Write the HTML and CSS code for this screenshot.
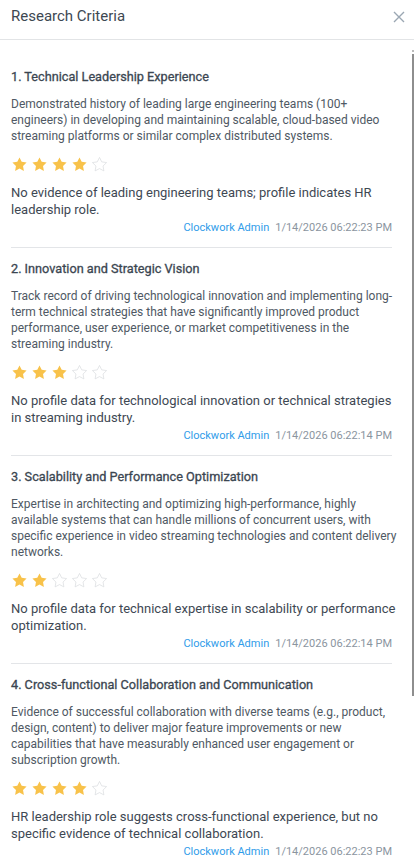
FILE: index.html
```html
<!DOCTYPE html>
<html>
<head>
<meta charset="utf-8">
<link rel="stylesheet" href="styles.css">
</head>
<body>
<div class="panel">
  <div class="header">
    <div class="heading">Research Criteria</div>
    <svg class="close" width="12" height="12" viewBox="0 0 12 12"><path d="M1 1L11 11M11 1L1 11" stroke="#9ba7b3" stroke-width="1.4" fill="none"/></svg>
  </div>
  <div class="list">
    <div class="item">
      <div class="title">1. Technical Leadership Experience</div>
      <div class="desc">Demonstrated history of leading large engineering teams (100+ engineers) in developing and maintaining scalable, cloud-based video streaming platforms or similar complex distributed systems.</div>
      <div class="stars">
        <svg class="star on" viewBox="0 0 24 24"><path d="M12 2l3.09 6.26L22 9.27l-5 4.87 1.18 6.88L12 17.77l-6.18 3.25L7 14.14 2 9.27l6.91-1.01L12 2z"/></svg>
        <svg class="star on" viewBox="0 0 24 24"><path d="M12 2l3.09 6.26L22 9.27l-5 4.87 1.18 6.88L12 17.77l-6.18 3.25L7 14.14 2 9.27l6.91-1.01L12 2z"/></svg>
        <svg class="star on" viewBox="0 0 24 24"><path d="M12 2l3.09 6.26L22 9.27l-5 4.87 1.18 6.88L12 17.77l-6.18 3.25L7 14.14 2 9.27l6.91-1.01L12 2z"/></svg>
        <svg class="star on" viewBox="0 0 24 24"><path d="M12 2l3.09 6.26L22 9.27l-5 4.87 1.18 6.88L12 17.77l-6.18 3.25L7 14.14 2 9.27l6.91-1.01L12 2z"/></svg>
        <svg class="star off" viewBox="0 0 24 24"><path d="M12 2l3.09 6.26L22 9.27l-5 4.87 1.18 6.88L12 17.77l-6.18 3.25L7 14.14 2 9.27l6.91-1.01L12 2z"/></svg>
      </div>
      <div class="comment">No evidence of leading engineering teams; profile indicates HR leadership role.</div>
      <div class="meta"><span class="author">Clockwork Admin</span><span class="date">1/14/2026 06:22:23 PM</span></div>
    </div>
    <div class="item">
      <div class="title">2. Innovation and Strategic Vision</div>
      <div class="desc">Track record of driving technological innovation and implementing long-term technical strategies that have significantly improved product performance, user experience, or market competitiveness in the streaming industry.</div>
      <div class="stars">
        <svg class="star on" viewBox="0 0 24 24"><path d="M12 2l3.09 6.26L22 9.27l-5 4.87 1.18 6.88L12 17.77l-6.18 3.25L7 14.14 2 9.27l6.91-1.01L12 2z"/></svg>
        <svg class="star on" viewBox="0 0 24 24"><path d="M12 2l3.09 6.26L22 9.27l-5 4.87 1.18 6.88L12 17.77l-6.18 3.25L7 14.14 2 9.27l6.91-1.01L12 2z"/></svg>
        <svg class="star on" viewBox="0 0 24 24"><path d="M12 2l3.09 6.26L22 9.27l-5 4.87 1.18 6.88L12 17.77l-6.18 3.25L7 14.14 2 9.27l6.91-1.01L12 2z"/></svg>
        <svg class="star off" viewBox="0 0 24 24"><path d="M12 2l3.09 6.26L22 9.27l-5 4.87 1.18 6.88L12 17.77l-6.18 3.25L7 14.14 2 9.27l6.91-1.01L12 2z"/></svg>
        <svg class="star off" viewBox="0 0 24 24"><path d="M12 2l3.09 6.26L22 9.27l-5 4.87 1.18 6.88L12 17.77l-6.18 3.25L7 14.14 2 9.27l6.91-1.01L12 2z"/></svg>
      </div>
      <div class="comment">No profile data for technological innovation or technical strategies in streaming industry.</div>
      <div class="meta"><span class="author">Clockwork Admin</span><span class="date">1/14/2026 06:22:14 PM</span></div>
    </div>
    <div class="item">
      <div class="title">3. Scalability and Performance Optimization</div>
      <div class="desc">Expertise in architecting and optimizing high-performance, highly available systems that can handle millions of concurrent users, with specific experience in video streaming technologies and content delivery networks.</div>
      <div class="stars">
        <svg class="star on" viewBox="0 0 24 24"><path d="M12 2l3.09 6.26L22 9.27l-5 4.87 1.18 6.88L12 17.77l-6.18 3.25L7 14.14 2 9.27l6.91-1.01L12 2z"/></svg>
        <svg class="star on" viewBox="0 0 24 24"><path d="M12 2l3.09 6.26L22 9.27l-5 4.87 1.18 6.88L12 17.77l-6.18 3.25L7 14.14 2 9.27l6.91-1.01L12 2z"/></svg>
        <svg class="star off" viewBox="0 0 24 24"><path d="M12 2l3.09 6.26L22 9.27l-5 4.87 1.18 6.88L12 17.77l-6.18 3.25L7 14.14 2 9.27l6.91-1.01L12 2z"/></svg>
        <svg class="star off" viewBox="0 0 24 24"><path d="M12 2l3.09 6.26L22 9.27l-5 4.87 1.18 6.88L12 17.77l-6.18 3.25L7 14.14 2 9.27l6.91-1.01L12 2z"/></svg>
        <svg class="star off" viewBox="0 0 24 24"><path d="M12 2l3.09 6.26L22 9.27l-5 4.87 1.18 6.88L12 17.77l-6.18 3.25L7 14.14 2 9.27l6.91-1.01L12 2z"/></svg>
      </div>
      <div class="comment">No profile data for technical expertise in scalability or performance optimization.</div>
      <div class="meta"><span class="author">Clockwork Admin</span><span class="date">1/14/2026 06:22:14 PM</span></div>
    </div>
    <div class="item">
      <div class="title">4. Cross-functional Collaboration and Communication</div>
      <div class="desc">Evidence of successful collaboration with diverse teams (e.g., product, design, content) to deliver major feature improvements or new capabilities that have measurably enhanced user engagement or subscription growth.</div>
      <div class="stars">
        <svg class="star on" viewBox="0 0 24 24"><path d="M12 2l3.09 6.26L22 9.27l-5 4.87 1.18 6.88L12 17.77l-6.18 3.25L7 14.14 2 9.27l6.91-1.01L12 2z"/></svg>
        <svg class="star on" viewBox="0 0 24 24"><path d="M12 2l3.09 6.26L22 9.27l-5 4.87 1.18 6.88L12 17.77l-6.18 3.25L7 14.14 2 9.27l6.91-1.01L12 2z"/></svg>
        <svg class="star on" viewBox="0 0 24 24"><path d="M12 2l3.09 6.26L22 9.27l-5 4.87 1.18 6.88L12 17.77l-6.18 3.25L7 14.14 2 9.27l6.91-1.01L12 2z"/></svg>
        <svg class="star on" viewBox="0 0 24 24"><path d="M12 2l3.09 6.26L22 9.27l-5 4.87 1.18 6.88L12 17.77l-6.18 3.25L7 14.14 2 9.27l6.91-1.01L12 2z"/></svg>
        <svg class="star off" viewBox="0 0 24 24"><path d="M12 2l3.09 6.26L22 9.27l-5 4.87 1.18 6.88L12 17.77l-6.18 3.25L7 14.14 2 9.27l6.91-1.01L12 2z"/></svg>
      </div>
      <div class="comment">HR leadership role suggests cross-functional experience, but no specific evidence of technical collaboration.</div>
      <div class="meta"><span class="author">Clockwork Admin</span><span class="date">1/14/2026 06:22:23 PM</span></div>
    </div>
  </div>
  <div class="scroll-mark"></div>
  <div class="scroll-thumb"></div>
</div>
</body>
</html>
```
FILE: styles.css
```css
html, body {
  margin: 0;
  padding: 0;
  background: #ffffff;
}
body {
  font-family: Roboto, "Liberation Sans", sans-serif;
  color: #3b4651;
  overflow: hidden;
  height: 866px;
}
.panel {
  position: relative;
  width: 414px;
  height: 866px;
  overflow: hidden;
}
.header {
  height: 40px;
  box-sizing: border-box;
  border-bottom: 1px solid #e2e4e6;
  display: flex;
  justify-content: space-between;
  align-items: flex-start;
  padding: 7px 9px 0 11px;
}
.heading {
  font-size: 15px;
  line-height: 18px;
  color: #3d4852;
}
.close {
  margin-top: 4px;
}
.list {
  padding: 28px 22px 0 11px;
}
.item {
  padding: 0 0 12px;
  border-bottom: 1px solid #e3e5e8;
  margin-bottom: 12px;
}
.title {
  font-size: 12.7px;
  line-height: 18px;
  font-weight: 400;
  -webkit-text-stroke: 0.3px #3b4651;
  color: #3b4651;
  margin-bottom: 10px;
}
.desc {
  font-size: 12px;
  line-height: 16px;
  color: #4f5964;
  margin: 0 -6px 11px 0;
}
.stars {
  display: flex;
  gap: 3px;
  height: 18px;
  align-items: center;
  margin-bottom: 11px;
}
.star {
  width: 17px;
  height: 17px;
}
.star.on path {
  fill: #f8c24a;
}
.star.off path {
  fill: none;
  stroke: #d9dbde;
  stroke-width: 1;
}
.comment {
  font-size: 13px;
  line-height: 17px;
  color: #3e4853;
  margin: 0 -6px 3px 0;
}
.meta {
  display: flex;
  justify-content: flex-end;
  gap: 6px;
  font-size: 11px;
  line-height: 14px;
}
.author {
  color: #2f9ce9;
}
.date {
  color: #8b95a0;
}
.scroll-mark {
  position: absolute;
  left: 412px;
  top: 50px;
  width: 2px;
  height: 2px;
  background: #bcbcbc;
}
.scroll-thumb {
  position: absolute;
  left: 412px;
  top: 54px;
  width: 2px;
  height: 642px;
  background: #8e8e8e;
}
```
